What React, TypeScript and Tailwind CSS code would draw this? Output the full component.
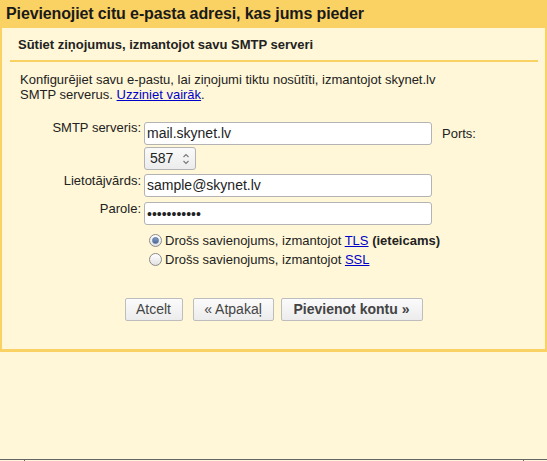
import React from "react";

function Radio({ checked }: { checked: boolean }) {
  return (
    <span className="relative inline-flex items-center justify-center w-[13px] h-[13px] rounded-full border border-[#8a8a8a] bg-gradient-to-b from-[#ffffff] to-[#e2e2e2] shrink-0">
      {checked && (
        <span className="w-[7px] h-[7px] rounded-full bg-gradient-to-b from-[#7f9cc4] to-[#4b6a97] border border-[#5a77a3]" />
      )}
    </span>
  );
}

export default function App() {
  return (
    <div className="w-[547px] h-[461px] bg-[#fff7d7] flex flex-col overflow-hidden text-black font-['Liberation_Sans',Arial,sans-serif]">
      <div className="border-l-2 border-r-2 border-b-[3px] border-[#fad163]">
        <div className="h-[28px] bg-[#fad163] pl-[4px] text-[16px] leading-[28px] font-bold text-[#1a1a1a] tracking-[-0.12px]">
          Pievienojiet citu e-pasta adresi, kas jums pieder
        </div>
        <div className="ml-[8px] mr-[7px] border-b-2 border-[#fad163] pl-[8px] pt-[9px] pb-[7px] text-[13px] leading-[16px] font-bold text-[#222]">
          Sūtiet ziņojumus, izmantojot savu SMTP serveri
        </div>
        <div className="pl-[18px] mt-[10px] text-[13px] leading-[15px] text-[#222]">
          Konfigurējiet savu e-pastu, lai ziņojumi tiktu nosūtīti, izmantojot skynet.lv
          <br />
          SMTP serverus. <span className="text-[#0000cc] underline">Uzziniet vairāk</span>.
        </div>

        <div className="mt-[20px] flex items-start">
          <div className="w-[139px] text-right text-[13px] leading-[16px] -mt-[2px] text-[#222]">SMTP serveris:</div>
          <div className="ml-[3px] h-[23px] w-[288px] border border-[#b3b3b3] rounded-[3px] bg-white px-[2px] text-[14px] leading-[21px] text-[#222]">
            mail.skynet.lv
          </div>
          <div className="ml-[10px] self-center text-[13px] leading-[16px] text-[#222]">Ports:</div>
        </div>

        <div className="mt-[2px] flex">
          <div className="w-[139px]" />
          <div className="ml-[3px] h-[23px] w-[52px] border border-[#b3b3b3] rounded-[3px] bg-gradient-to-b from-[#fafafa] to-[#ececec] pl-[5px] pr-[4px] flex items-center justify-between text-[14px] text-[#222]">
            <span>587</span>
            <svg width="8" height="14" viewBox="0 0 8 14" className="mr-[1px]">
              <path d="M1.5 5 L4 2.5 L6.5 5" fill="none" stroke="#777" strokeWidth="1.1" />
              <path d="M1.5 9 L4 11.5 L6.5 9" fill="none" stroke="#777" strokeWidth="1.1" />
            </svg>
          </div>
        </div>

        <div className="mt-[4px] flex items-start">
          <div className="w-[139px] text-right text-[13px] leading-[16px] -mt-[1px] text-[#222]">Lietotājvārds:</div>
          <div className="ml-[3px] h-[23px] w-[288px] border border-[#b3b3b3] rounded-[3px] bg-white px-[2px] text-[14px] leading-[21px] text-[#222]">
            sample@skynet.lv
          </div>
        </div>

        <div className="mt-[5px] flex items-start">
          <div className="w-[139px] text-right text-[13px] leading-[16px] -mt-[1px] text-[#222]">Parole:</div>
          <input
            type="password"
            readOnly
            value="12345678901"
            className="ml-[3px] h-[23px] w-[288px] border border-[#b3b3b3] rounded-[3px] bg-white px-[2px] text-[14px] text-[#222] outline-none"
          />
        </div>

        <div className="mt-[6px] pl-[147px] text-[13px] leading-[19px] text-[#222]">
          <div className="flex items-center">
            <Radio checked />
            <span className="ml-[3px]">
              Drošs savienojums, izmantojot <span className="text-[#0000cc] underline">TLS</span>{" "}
              <span className="font-bold">(ieteicams)</span>
            </span>
          </div>
          <div className="flex items-center">
            <Radio checked={false} />
            <span className="ml-[3px]">
              Drošs savienojums, izmantojot <span className="text-[#0000cc] underline">SSL</span>
            </span>
          </div>
        </div>

        <div className="mt-[29px] mb-[28px] flex justify-center text-[14px]">
          <div className="w-[58px] h-[23px] border border-[#bdbdbd] rounded-[2px] bg-gradient-to-b from-[#fbfbfb] to-[#ececec] flex items-center justify-center text-[#444]">
            Atcelt
          </div>
          <div className="ml-[10px] w-[81px] h-[23px] border border-[#bdbdbd] rounded-[2px] bg-gradient-to-b from-[#fbfbfb] to-[#ececec] flex items-center justify-center text-[#444]">
            « Atpakaļ
          </div>
          <div className="ml-[7px] w-[142px] h-[23px] border border-[#bdbdbd] rounded-[2px] bg-gradient-to-b from-[#fbfbfb] to-[#ececec] flex items-center justify-center font-bold text-[#444]">
            Pievienot kontu »
          </div>
        </div>
      </div>
      <div className="flex-1" />
      <div className="shrink-0 border-t border-[#666]">
        <div className="ml-[24px] w-[500px] h-[1px] border-x border-[#666]" />
      </div>
    </div>
  );
}
